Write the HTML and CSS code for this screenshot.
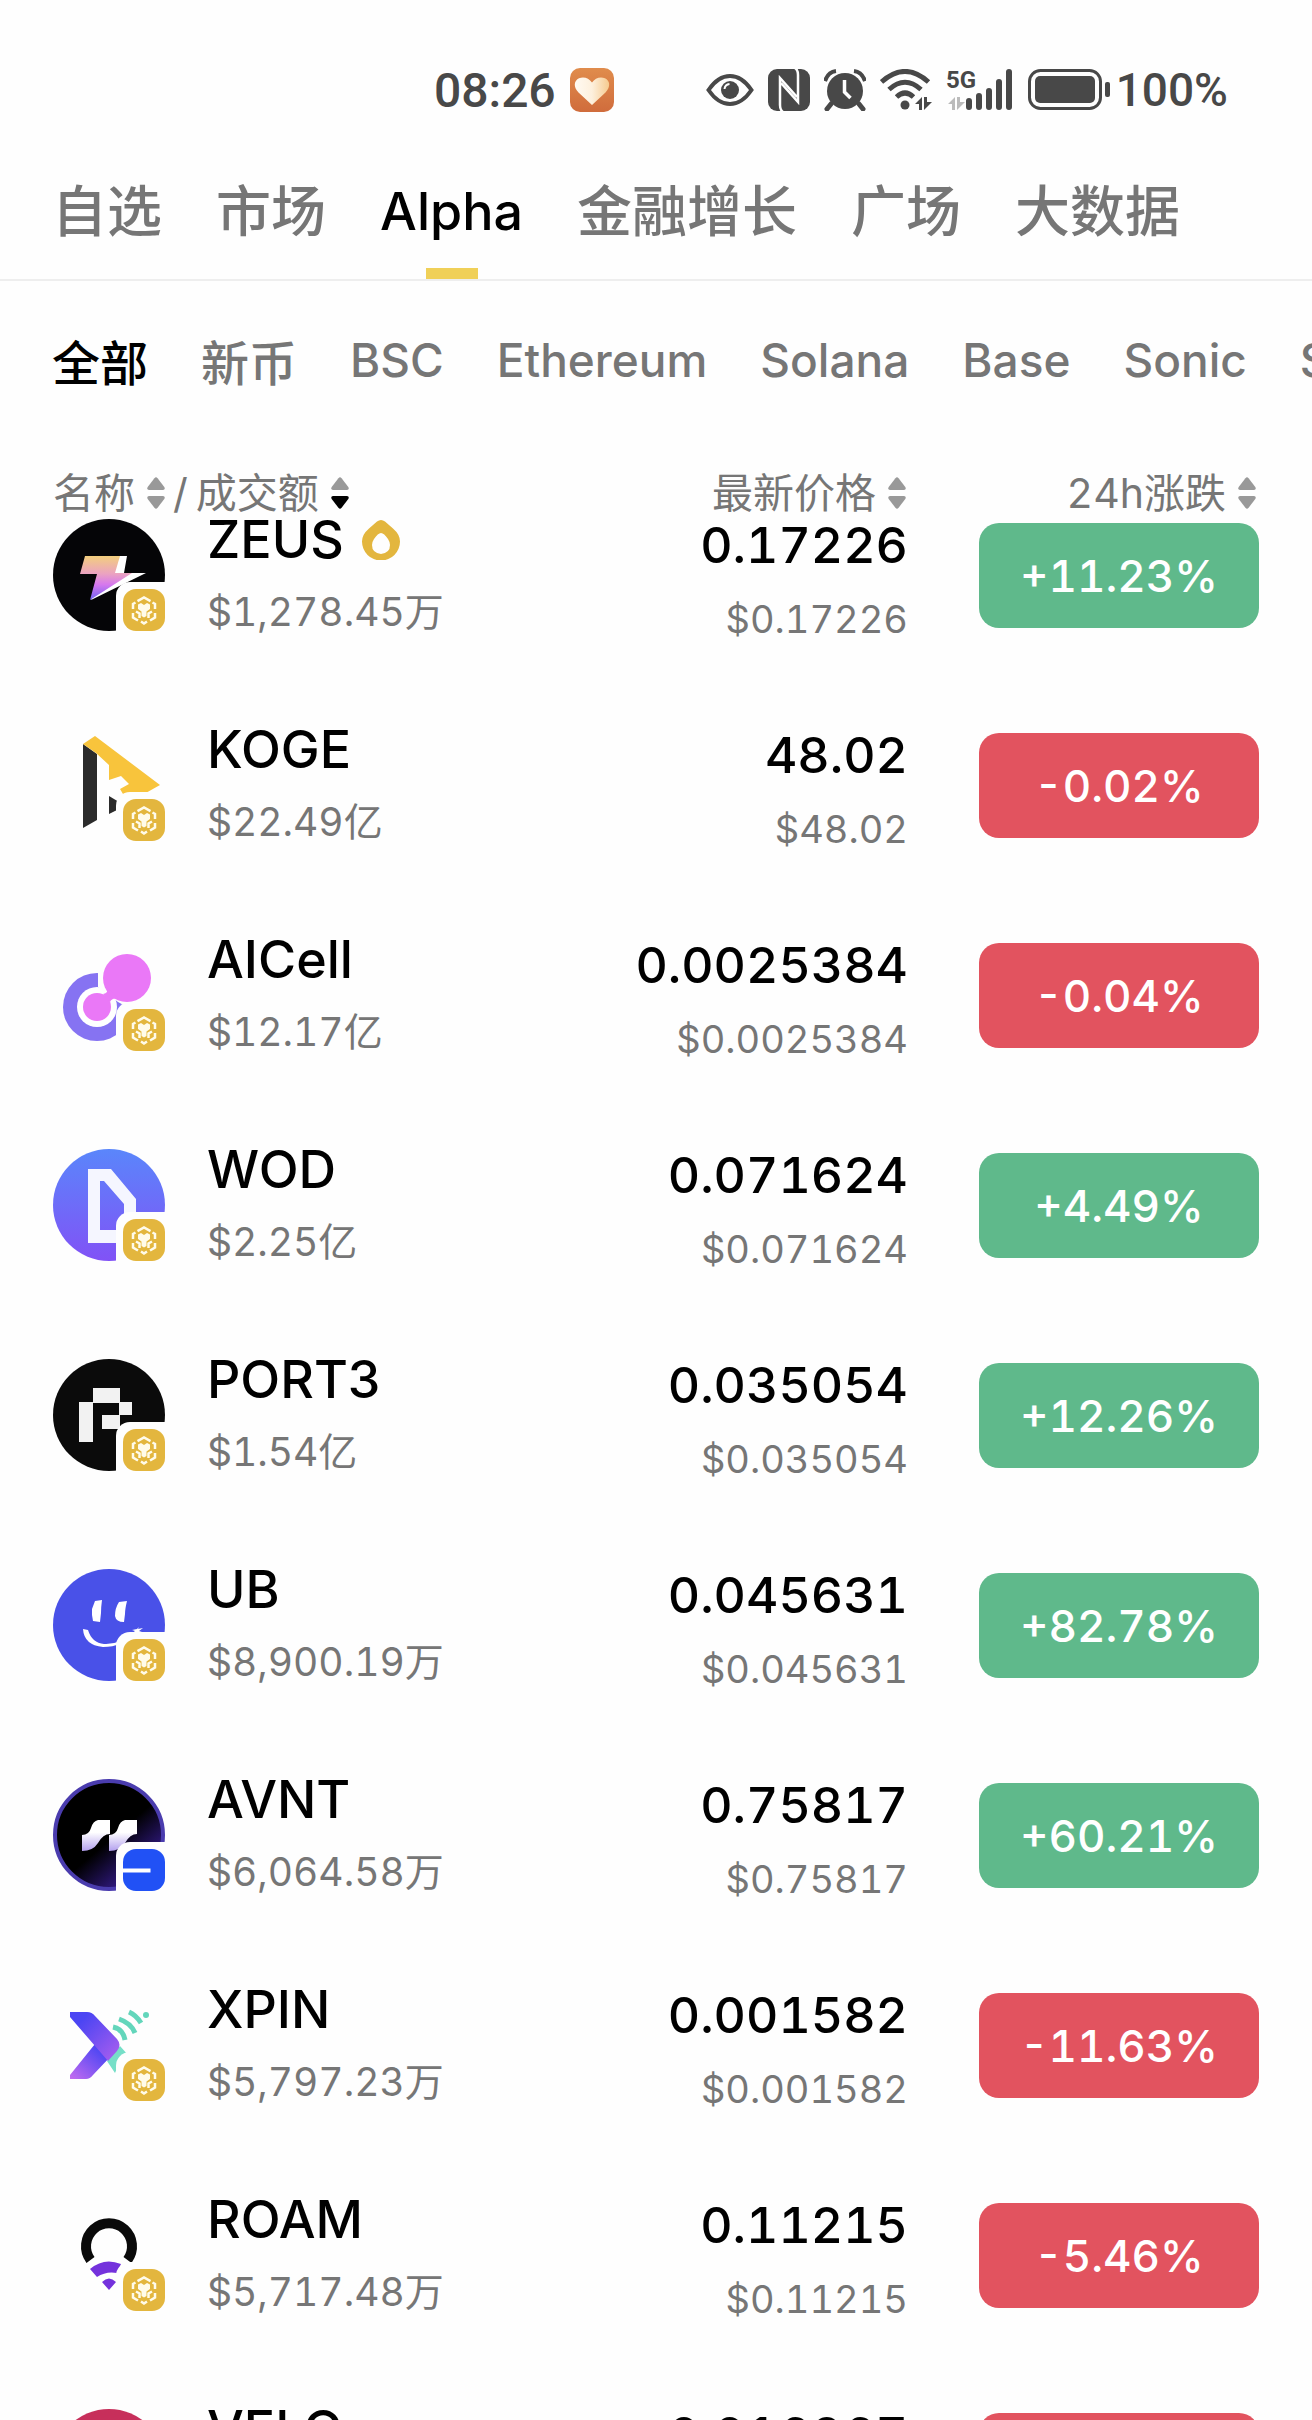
FILE: index.html
```
<!DOCTYPE html>
<html lang="zh-CN">
<head>
    <meta charset="UTF-8">
    <meta name="viewport" content="width=device-width, initial-scale=1.0">
    <title>Alpha</title>
    <link rel="stylesheet" href="styles.css">
</head>
<body>
    <!-- shared symbols -->
    <svg class="defs" aria-hidden="true">
        <symbol id="sort" viewBox="0 0 18 32">
            <path d="M7.4 1.2Q9-.8 10.6 1.2L17.3 10Q18.6 12.6 16 13H2Q-.6 12.6.7 10Z" fill="#999"/>
            <path d="M7.4 30.8Q9 32.8 10.6 30.8L17.3 22Q18.6 19.4 16 19H2Q-.6 19.4.7 22Z" fill="currentColor"/>
        </symbol>
        <symbol id="bnb" viewBox="0 0 42 42">
            <rect width="42" height="42" rx="13" fill="#e3b63e"/>
            <path d="M14.500 12.200L21 8.500l6.500 3.700M10 20v-5l2.500-1.500M32 20v-5l-2.500-1.500M10 24v4.500l5 3M32 24v4.500l-5 3M18 32.500l3 2 3-2M13 22.500l3.500 2v4.500M29 22.500l-3.500 2v4.500" fill="none" stroke="#fffbea" stroke-width="2.500"/>
            <path d="M15 15.500l3-1.500 3 2 3-2 3 1.500v4.500l-3.500 2.500v4.500l-2.500 1.500-2.500-1.500v-4.500L15 20z" fill="#fffbea"/>
        </symbol>
        <symbol id="base" viewBox="0 0 42 42">
            <rect width="42" height="42" rx="13" fill="#2151f5"/>
            <path d="M0 19.500h27.500v4H0z" fill="#fff"/>
        </symbol>
    </svg>

    <div class="status-bar">
        <div class="status-left">
            <span class="time">08:26</span>
            <svg width="44" height="44" viewBox="0 0 44 44">
                <defs>
                    <linearGradient id="heartBg" x1="0" y1="0" x2="0" y2="1"><stop offset="0" stop-color="#e08c4c"/><stop offset="1" stop-color="#d06c3c"/></linearGradient>
                    <linearGradient id="heartFg" x1="0" y1="0" x2="1" y2="0"><stop offset="0" stop-color="#fffaf2"/><stop offset=".5" stop-color="#fdf0dd"/><stop offset="1" stop-color="#f6ca8e"/></linearGradient>
                </defs>
                <rect width="44" height="44" rx="10" fill="url(#heartBg)"/>
                <path d="M22 37L8.500 24.500C3 19 4 12.500 9 10.300c5-2 10 0 13 4.200 3-4.200 8-6.200 13-4.200 5 2.200 6 8.700.5 14.200z" fill="url(#heartFg)"/>
            </svg>
        </div>
        <div class="status-right">
            <svg width="48" height="42" viewBox="0 0 48 42">
                <path d="M2.500 21Q12 7 24 7t21.500 14Q36 35 24 35T2.500 21z" fill="none" stroke="#484848" stroke-width="4"/>
                <circle cx="24" cy="21" r="9" fill="#484848"/>
                <path d="M18.500 20q.5-4.500 5-5" fill="none" stroke="#fff" stroke-width="2"/>
            </svg>
            <svg width="42" height="42" viewBox="0 0 42 42">
                <rect width="42" height="42" rx="9" fill="#484848"/>
                <path d="M15 43q-3-2-3-7V9l17 19M27-1q3 2 3 7v27L13 14" fill="none" stroke="#fff" stroke-width="2.500"/>
            </svg>
            <svg width="42" height="42" viewBox="0 0 42 42">
                <path d="M1 12Q4 3 12 2M41 12Q38 3 30 2" fill="none" stroke="#484848" stroke-width="4"/>
                <path d="M7 35l-4 5M35 35l4 5" stroke="#484848" stroke-width="5" stroke-linecap="round"/>
                <circle cx="21" cy="22" r="18" fill="#484848"/>
                <path d="M20.500 11v12l6 6" fill="none" stroke="#fff" stroke-width="3.500"/>
            </svg>
            <svg width="52" height="42" viewBox="0 0 52 42">
                <g fill="none" stroke="#484848" stroke-width="5">
                    <path d="M1.500 13Q25 -8 48.500 13M9 20.500Q25 6 41 20.500M16.500 28Q25 20 33.500 28"/>
                </g>
                <circle cx="25" cy="36" r="4.500" fill="#484848"/>
                <path d="M35 35l7-7v13h-3v-6zM44 28h3v5h5l-8 8z" fill="#484848"/>
            </svg>
            <svg width="68" height="54" viewBox="0 -6 68 54">
                <text class="net" x="0" y="19">5G</text>
                <path d="M2 35l7-7v13H6v-6zM11 28h3v5h5l-8 8z" fill="#bbb"/>
                <path d="M23 32v6M33 27v11M43 22v16M53 13v25M63 3v35" stroke="#484848" stroke-width="6" stroke-linecap="round"/>
            </svg>
            <svg width="82" height="42" viewBox="0 0 82 42">
                <rect x="1.500" y="1.500" width="71" height="38" rx="11" fill="none" stroke="#484848" stroke-width="3"/>
                <rect x="7" y="7" width="60" height="27" rx="5" fill="#484848"/>
                <rect x="77" y="13" width="5" height="15" rx="2" fill="#484848"/>
            </svg>
            <span class="battery">100%</span>
        </div>
    </div>

    <nav class="tabs">
        <a href="#">自选</a>
        <a href="#">市场</a>
        <a href="#" class="latin active">Alpha</a>
        <a href="#">金融增长</a>
        <a href="#">广场</a>
        <a href="#">大数据</a>
    </nav>

    <nav class="chains">
        <button class="active">全部</button>
        <button>新币</button>
        <button class="latin">BSC</button>
        <button class="latin">Ethereum</button>
        <button class="latin">Solana</button>
        <button class="latin">Base</button>
        <button class="latin">Sonic</button>
        <button class="latin">S</button>
    </nav>

    <table class="market">
        <thead>
            <tr>
                <th class="col-name">
                    <div class="sorters">
                        <button>名称<svg class="sort"><use href="#sort"/></svg></button>
                        <span class="slash">/</span>
                        <button>成交额<svg class="sort desc"><use href="#sort"/></svg></button>
                    </div>
                </th>
                <th class="col-price"><button>最新价格<svg class="sort"><use href="#sort"/></svg></button></th>
                <th class="col-change"><button>24h涨跌<svg class="sort"><use href="#sort"/></svg></button></th>
            </tr>
        </thead>
        <tbody>
            <tr>
                <td>
                    <div class="token">
                        <div class="logo">
                            <svg viewBox="0 0 112 112">
                                <defs><linearGradient id="zeus" x1="0" y1="0" x2="0" y2="1"><stop offset="0" stop-color="#f3cf7d"/><stop offset=".4" stop-color="#eba3c0"/><stop offset=".65" stop-color="#d678ee"/><stop offset="1" stop-color="#6f62f0"/></linearGradient></defs>
                                <circle cx="56" cy="56" r="56" fill="#050507"/>
                                <path d="M62 37h12l-3 17h22L38 81l3-6z" fill="#fff"/>
                                <path d="M32 37h35l-5 17h17L37 81l7-26H27z" fill="url(#zeus)"/>
                            </svg>
                            <svg class="badge"><use href="#bnb"/></svg>
                        </div>
                        <div class="info">
                            <div class="name">ZEUS
                                <svg width="38" height="40" viewBox="0 0 38 40"><path d="M15 1.500q4-3 8 0l8 7q7 6 7 13a19 19 0 0 1-38 0q0-7 7-13zM19 13q-3 0-7 6-2 3-2 6 0 8 9 9 9-1 9-9 0-3-2-6-4-6-7-6z" fill="#e3b63e" fill-rule="evenodd"/></svg>
                            </div>
                            <div class="sub">$1,278.45万</div>
                        </div>
                    </div>
                </td>
                <td class="price"><div class="last">0.17226</div><div class="sub">$0.17226</div></td>
                <td class="change"><button class="pill up">+11.23%</button></td>
            </tr>
            <tr>
                <td>
                    <div class="token">
                        <div class="logo">
                            <svg viewBox="0 0 112 112">
                                <path d="M30 15l14 10v66l-14 8z" fill="#2b2b2b"/>
                                <path d="M30 15l12-8 65 49-16 9H70l-3-5 9-5-8-8-12 4V36L43 24z" fill="#f8c43c"/>
                                <path d="M56 67l10 6v7l-10 5z" fill="#2b2b2b"/>
                            </svg>
                            <svg class="badge"><use href="#bnb"/></svg>
                        </div>
                        <div class="info">
                            <div class="name">KOGE</div>
                            <div class="sub">$22.49亿</div>
                        </div>
                    </div>
                </td>
                <td class="price"><div class="last">48.02</div><div class="sub">$48.02</div></td>
                <td class="change"><button class="pill down">-0.02%</button></td>
            </tr>
            <tr>
                <td>
                    <div class="token">
                        <div class="logo">
                            <svg viewBox="0 0 112 112">
                                <circle cx="44" cy="68" r="34" fill="#8673f2"/>
                                <circle cx="44" cy="68" r="20" fill="#fff"/>
                                <path d="M45 28v20l20 15 18 10V23z" fill="#fefefe"/>
                                <circle cx="74" cy="39" r="24" fill="#ea78f7"/>
                                <circle cx="44" cy="68" r="14" fill="#ea78f7"/>
                                <path d="M50 55q6-1 4-7l12 12q-7-2-9 3z" fill="#ea78f7"/>
                            </svg>
                            <svg class="badge"><use href="#bnb"/></svg>
                        </div>
                        <div class="info">
                            <div class="name">AICell</div>
                            <div class="sub">$12.17亿</div>
                        </div>
                    </div>
                </td>
                <td class="price"><div class="last">0.0025384</div><div class="sub">$0.0025384</div></td>
                <td class="change"><button class="pill down">-0.04%</button></td>
            </tr>
            <tr>
                <td>
                    <div class="token">
                        <div class="logo">
                            <svg viewBox="0 0 112 112">
                                <defs><linearGradient id="wod" x1="0" y1="0" x2="0" y2="1"><stop offset="0" stop-color="#5a86fb"/><stop offset="1" stop-color="#8152f6"/></linearGradient></defs>
                                <circle cx="56" cy="56" r="56" fill="url(#wod)"/>
                                <path d="M35 20h23l25 30v44H35zM47 32v49h24V55L51 32z" fill="#f5f6ff" fill-rule="evenodd"/>
                            </svg>
                            <svg class="badge"><use href="#bnb"/></svg>
                        </div>
                        <div class="info">
                            <div class="name">WOD</div>
                            <div class="sub">$2.25亿</div>
                        </div>
                    </div>
                </td>
                <td class="price"><div class="last">0.071624</div><div class="sub">$0.071624</div></td>
                <td class="change"><button class="pill up">+4.49%</button></td>
            </tr>
            <tr>
                <td>
                    <div class="token">
                        <div class="logo">
                            <svg viewBox="0 0 112 112">
                                <circle cx="56" cy="56" r="56" fill="#0b0b0b"/>
                                <path d="M40 29h27v14h12v13H67v14H49V56h17V44H40v39H26V43h14z" fill="#f2f2f2"/>
                            </svg>
                            <svg class="badge"><use href="#bnb"/></svg>
                        </div>
                        <div class="info">
                            <div class="name">PORT3</div>
                            <div class="sub">$1.54亿</div>
                        </div>
                    </div>
                </td>
                <td class="price"><div class="last">0.035054</div><div class="sub">$0.035054</div></td>
                <td class="change"><button class="pill up">+12.26%</button></td>
            </tr>
            <tr>
                <td>
                    <div class="token">
                        <div class="logo">
                            <svg viewBox="0 0 112 112">
                                <circle cx="56" cy="56" r="56" fill="#4951e8"/>
                                <path d="M42 32l7-1q-1 7-1 13l-1 9-7-1-1-6 0-6zM66 33l8-1q-2 8-2 13l-1 8q-8 0-9-6 0-8 4-14z" fill="#fff"/>
                                <path d="M30 60l5 1q4 13 16 14 16 1 31-13l-3-1 5-1 2-2-1 2 5-1-4 3 3 1-5 1Q69 78 50 78 31 76 30 60z" fill="#fff"/>
                            </svg>
                            <svg class="badge"><use href="#bnb"/></svg>
                        </div>
                        <div class="info">
                            <div class="name">UB</div>
                            <div class="sub">$8,900.19万</div>
                        </div>
                    </div>
                </td>
                <td class="price"><div class="last">0.045631</div><div class="sub">$0.045631</div></td>
                <td class="change"><button class="pill up">+82.78%</button></td>
            </tr>
            <tr>
                <td>
                    <div class="token">
                        <div class="logo">
                            <svg viewBox="0 0 112 112">
                                <defs>
                                    <linearGradient id="avntBg" x1=".2" y1=".2" x2=".8" y2=".9"><stop offset=".5" stop-color="#000"/><stop offset="1" stop-color="#3a1e9a"/></linearGradient>
                                    <linearGradient id="avntFg" x1="0" y1="0" x2="0" y2="1"><stop offset=".4" stop-color="#fff"/><stop offset="1" stop-color="#b3a0ee"/></linearGradient>
                                </defs>
                                <circle cx="56" cy="56" r="54" fill="url(#avntBg)" stroke="#4a3cae" stroke-width="4"/>
                                <path d="M45 41h12v14q-7 0-12 9-5 8-16 8V56q7 0 9-7 2-7 7-8zM72 41h12v14q-7 0-12 9-5 8-16 8V56q7 0 9-7 2-7 7-8z" fill="url(#avntFg)"/>
                            </svg>
                            <svg class="badge"><use href="#base"/></svg>
                        </div>
                        <div class="info">
                            <div class="name">AVNT</div>
                            <div class="sub">$6,064.58万</div>
                        </div>
                    </div>
                </td>
                <td class="price"><div class="last">0.75817</div><div class="sub">$0.75817</div></td>
                <td class="change"><button class="pill up">+60.21%</button></td>
            </tr>
            <tr>
                <td>
                    <div class="token">
                        <div class="logo">
                            <svg viewBox="0 0 112 112">
                                <defs>
                                    <linearGradient id="xpinA" x1="0" y1="0" x2="1" y2="1"><stop offset=".2" stop-color="#4b45f3"/><stop offset="1" stop-color="#ae5fee"/></linearGradient>
                                    <linearGradient id="xpinB" x1="1" y1="0" x2="0" y2="1"><stop offset=".2" stop-color="#4b45f3"/><stop offset="1" stop-color="#c46cf0"/></linearGradient>
                                </defs>
                                <g transform="translate(0 10)">
                                    <path d="M54 62l13-15 8 9-7 4-6 14z" fill="#76dfc8"/>
                                    <path d="M42 45l16 12-18 19q-3 4-7 4H17v-4z" fill="url(#xpinB)"/>
                                    <path d="M17 13h17q5 0 8 4l22 23q5 6 0 12l-9 10L17 18z" fill="url(#xpinA)"/>
                                    <path d="M60 28q10 2 12 13M66 20q12 4 16 14M76 13q7 3 12 11" fill="none" stroke="#63d6bb" stroke-width="5"/>
                                    <circle cx="93" cy="16" r="3" fill="#63d6bb"/>
                                </g>
                            </svg>
                            <svg class="badge"><use href="#bnb"/></svg>
                        </div>
                        <div class="info">
                            <div class="name">XPIN</div>
                            <div class="sub">$5,797.23万</div>
                        </div>
                    </div>
                </td>
                <td class="price"><div class="last">0.001582</div><div class="sub">$0.001582</div></td>
                <td class="change"><button class="pill down">-11.63%</button></td>
            </tr>
            <tr>
                <td>
                    <div class="token">
                        <div class="logo">
                            <svg viewBox="0 0 112 112">
                                <path d="M37.500 61a23 23 0 1 1 37 0" fill="none" stroke="#0a0a0a" stroke-width="10"/>
                                <path d="M37 70q14-12 31-5l-4 9q-11-2-20 4zM49 83q7-7 14 0l-7 8z" fill="#7432dc"/>
                            </svg>
                            <svg class="badge"><use href="#bnb"/></svg>
                        </div>
                        <div class="info">
                            <div class="name">ROAM</div>
                            <div class="sub">$5,717.48万</div>
                        </div>
                    </div>
                </td>
                <td class="price"><div class="last">0.11215</div><div class="sub">$0.11215</div></td>
                <td class="change"><button class="pill down">-5.46%</button></td>
            </tr>
            <tr>
                <td>
                    <div class="token">
                        <div class="logo">
                            <svg viewBox="0 0 112 112"><circle cx="56" cy="56" r="56" fill="#c72f5b"/></svg>
                        </div>
                        <div class="info">
                            <div class="name">VELO</div>
                        </div>
                    </div>
                </td>
                <td class="price"><div class="last">0.016267</div></td>
                <td class="change"><button class="pill down" aria-label="VELO"></button></td>
            </tr>
        </tbody>
    </table>
</body>
</html>
```
FILE: styles.css
```
* {
    box-sizing: border-box;
}
html {
    overflow: hidden;
    height: 100%;
}
body {
    margin: 0;
    height: 100%;
    overflow: hidden;
    background: #fefefe;
    color: #000;
    font-family: Inter, "Noto Sans CJK SC", sans-serif;
    font-variant-numeric: tabular-nums;
}
button {
    border: none;
    background: none;
    padding: 0;
    font: inherit;
    color: inherit;
    font-variant-numeric: inherit;
}
svg {
    display: block;
    flex: none;
}
.defs {
    width: 0;
    height: 0;
    position: absolute;
}

/* status bar */
.status-bar {
    display: flex;
    justify-content: space-between;
    align-items: center;
    height: 140px;
    padding: 40px 84px 0 434px;
    color: #484848;
    font-family: Roboto, sans-serif;
    font-weight: 500;
    font-size: 48px;
}
.status-left,
.status-right {
    display: flex;
    align-items: center;
    gap: 14px;
}
.status-right {
    font-size: 46px;
}
.status-right .battery {
    margin-left: -8px;
}
.net {
    font: 700 24px Roboto, sans-serif;
    fill: #484848;
}

/* main tabs */
.tabs {
    display: flex;
    gap: 54px;
    height: 141px;
    padding: 0 52px;
    border-bottom: 2px solid #eee;
    white-space: nowrap;
}
.tabs a {
    position: relative;
    color: #767676;
    text-decoration: none;
    font-size: 55px;
    font-weight: 500;
    line-height: 143px;
}
.tabs .latin {
    font-size: 52px;
}
.tabs .active {
    color: #000;
}
.tabs .active::after {
    content: "";
    position: absolute;
    left: 50%;
    bottom: 0;
    width: 52px;
    height: 11px;
    margin-left: -26px;
    background: #f0d058;
}

/* chain filter */
.chains {
    display: flex;
    gap: 53px;
    height: 158px;
    padding-left: 52px;
    overflow: hidden;
    color: #767676;
    font-size: 48px;
    font-weight: 500;
    white-space: nowrap;
}
.chains .latin {
    font-size: 46px;
}
.chains .active {
    color: #000;
}

/* token list */
.market {
    width: 100%;
    border-collapse: collapse;
    table-layout: fixed;
}
.market th,
.market td {
    padding: 0;
    text-align: left;
    font-weight: 400;
}
.market th {
    height: 80px;
    color: #767676;
    font-size: 41px;
    line-height: 52px;
    vertical-align: bottom;
}
.market th button {
    display: inline-flex;
    align-items: center;
    gap: 12px;
    vertical-align: bottom;
}
.market .col-name {
    width: 50%;
    padding-left: 53px;
}
.market .col-price {
    padding-right: 2px;
    text-align: right;
}
.market .col-change {
    width: 404px;
    padding-right: 56px;
    text-align: right;
}
.sorters {
    display: flex;
    gap: 8px;
}
.sort {
    width: 18px;
    height: 32px;
    color: #999;
}
.sort.desc {
    color: #000;
}
.market td {
    height: 210px;
    vertical-align: top;
}
.token {
    display: flex;
    gap: 42px;
    padding-left: 53px;
}
.logo {
    position: relative;
    flex: none;
    width: 112px;
    height: 112px;
}
/* chain badge cuts a white corner out of the logo */
.badge {
    position: absolute;
    right: 0;
    bottom: 0;
    width: 49px;
    height: 49px;
    padding: 7px 0 0 7px;
    border-radius: 14px 0 0 0;
    background: #fefefe;
}
.name,
.last {
    display: flex;
    align-items: center;
    gap: 18px;
    margin-bottom: 30px;
    font-size: 52px;
    font-weight: 500;
    line-height: 42px;
}
.last {
    justify-content: flex-end;
    margin-bottom: 32px;
    font-size: 50px;
}
.sub {
    color: #767676;
    font-size: 38px;
    line-height: 42px;
}
.market .price {
    padding-top: 5px;
    text-align: right;
}
.market .change {
    padding: 4px 53px 0 0;
    text-align: right;
}
.pill {
    width: 280px;
    height: 105px;
    border-radius: 20px;
    color: #fff;
    font-size: 44px;
    font-weight: 500;
    vertical-align: top;
}
.token .sub {
    font-size: 39px;
}
.pill.up {
    background: #5fb98b;
}
.pill.down {
    background: #e2535f;
}
```
